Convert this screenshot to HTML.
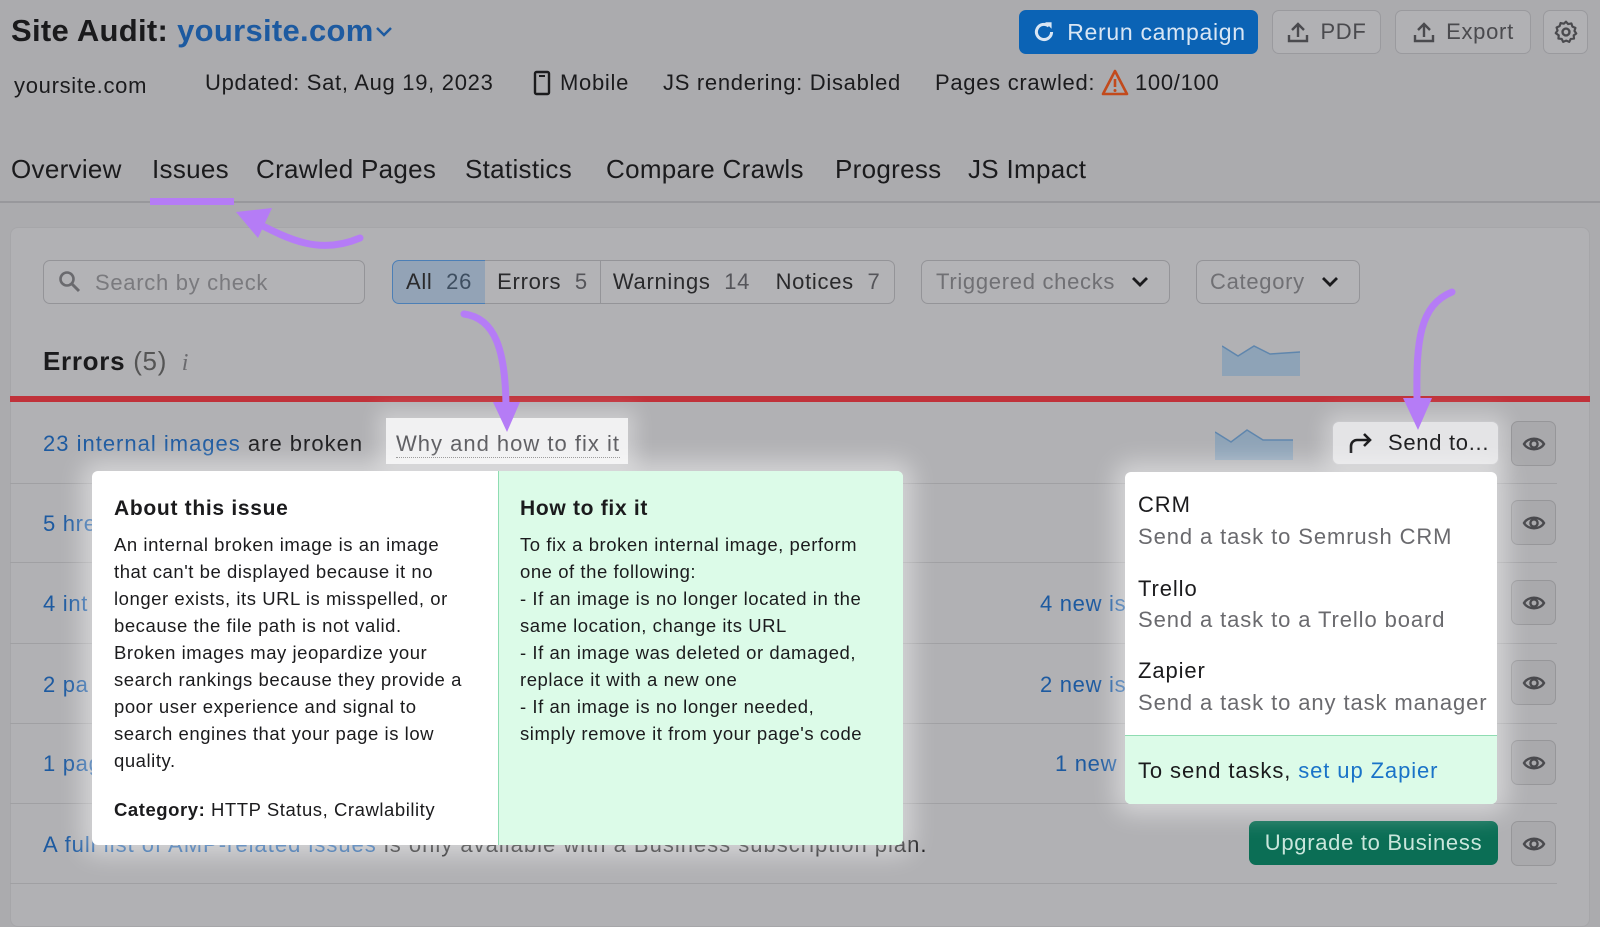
<!DOCTYPE html>
<html><head><meta charset="utf-8"><style>
*{margin:0;padding:0;box-sizing:border-box}
body{width:1600px;height:888px;overflow:hidden;background:#ababae;font-family:"Liberation Sans",sans-serif;color:#1b1b1d;position:relative;letter-spacing:0.7px}
.a{position:absolute;white-space:nowrap}
.blue{color:#1d5aa0}
.btn{position:absolute;border:1px solid #9a9a9e;border-radius:7px;background:#b1b1b4;display:flex;align-items:center;justify-content:center;gap:10px;font-size:22px;color:#4a4a4e}
.seg{position:absolute;top:260px;height:44px;border:1px solid #949498;display:flex;align-items:center;justify-content:center;font-size:22px;color:#2a2a2c;background:#b3b3b6}
.eye{position:absolute;left:1511px;width:45px;height:45px;border:1px solid #969699;border-radius:7px;background:#a9a9ac;display:flex;align-items:center;justify-content:center}
.sep{position:absolute;left:10px;width:1547px;height:1px;background:#a0a0a3}
.row{font-size:22px}
p.b{font-size:18.5px;line-height:27px;letter-spacing:0.55px}
.tab{top:154px;font-size:26px;letter-spacing:0.3px}
</style></head><body>
<!-- header -->
<div class="a" style="left:11px;top:13px;font-size:31px;font-weight:bold;color:#1a1a1c;letter-spacing:0.3px">Site Audit: <span class="blue">yoursite.com</span></div>
<svg class="a" style="left:375px;top:26px" width="18" height="12"><path d="M2 2l7 7 7-7" stroke="#1d5aa0" stroke-width="2.5" fill="none"/></svg>
<div class="btn" style="left:1019px;top:10px;width:239px;height:44px;background:#0b63b5;border-color:#0b63b5;color:#d9e6f4;font-size:23px">
<svg width="26" height="26" viewBox="0 0 24 24"><path d="M19 12a7 7 0 1 1-2.5-5.4" stroke="#d9e6f4" stroke-width="2.8" fill="none"/><path d="M13 3h6v6z" fill="#d9e6f4"/></svg>Rerun campaign</div>
<div class="btn" style="left:1272px;top:10px;width:109px;height:44px">
<svg width="24" height="24" viewBox="0 0 24 24"><path d="M12 17V4M6 10l6-6 6 6M3 15v6h18v-6" stroke="#4a4a4e" stroke-width="2.4" fill="none"/></svg>PDF</div>
<div class="btn" style="left:1395px;top:10px;width:136px;height:44px">
<svg width="24" height="24" viewBox="0 0 24 24"><path d="M12 17V4M6 10l6-6 6 6M3 15v6h18v-6" stroke="#4a4a4e" stroke-width="2.4" fill="none"/></svg>Export</div>
<div class="btn" style="left:1543px;top:10px;width:45px;height:44px">
<svg width="26" height="26" viewBox="0 0 24 24"><circle cx="12" cy="12" r="3.2" stroke="#4a4a4e" stroke-width="2.2" fill="none"/><path d="M12 2.5l2 2.2 3-.6.9 2.9 2.8 1.2-.9 2.8 1.7 2.4-2.4 1.7.3 3-3 .3-1.4 2.7-2.8-1.2-2.8 1.2-1.4-2.7-3-.3.3-3L2.5 13l1.7-2.4-.9-2.8 2.8-1.2.9-2.9 3 .6z" stroke="#4a4a4e" stroke-width="2" fill="none" stroke-linejoin="round"/></svg></div>
<div class="a" style="left:14px;top:73px;font-size:22px">yoursite.com</div>
<div class="a" style="left:205px;top:70px;font-size:22px">Updated: Sat, Aug 19, 2023</div>
<svg class="a" style="left:533px;top:70px" width="18" height="26"><rect x="2" y="2" width="14" height="22" rx="1.5" stroke="#1b1b1d" stroke-width="2.4" fill="none"/><rect x="6" y="5" width="6" height="2" fill="#1b1b1d"/></svg>
<div class="a" style="left:560px;top:70px;font-size:22px">Mobile</div>
<div class="a" style="left:663px;top:70px;font-size:22px">JS rendering: Disabled</div>
<div class="a" style="left:935px;top:70px;font-size:22px">Pages crawled:</div>
<svg class="a" style="left:1101px;top:69px" width="28" height="28" viewBox="0 0 28 28"><path d="M14 2L26 25H2z" stroke="#c24a1c" stroke-width="2.6" fill="none" stroke-linejoin="round"/><path d="M14 10v8" stroke="#c24a1c" stroke-width="2.6"/><circle cx="14" cy="21.5" r="1.5" fill="#c24a1c"/></svg>
<div class="a" style="left:1135px;top:70px;font-size:22px">100/100</div>
<!-- tabs -->
<div class="a tab" style="left:11px">Overview</div>
<div class="a tab" style="left:152px">Issues</div>
<div class="a tab" style="left:256px">Crawled Pages</div>
<div class="a tab" style="left:465px">Statistics</div>
<div class="a tab" style="left:606px">Compare Crawls</div>
<div class="a tab" style="left:835px">Progress</div>
<div class="a tab" style="left:968px">JS Impact</div>
<div class="a" style="left:0;top:201px;width:1600px;height:2px;background:#98989c"></div>
<div class="a" style="left:150px;top:198px;width:84px;height:7px;background:#b57cf6"></div>
<!-- panel -->
<div class="a" style="left:10px;top:227px;width:1580px;height:700px;background:#b1b1b4;border:1px solid #a6a6a9;border-radius:8px"></div>
<svg class="a" style="left:0;top:0" width="1600" height="888">
<path d="M360 238 C320 255 290 240 255 222" stroke="#b57cf6" stroke-width="7" fill="none" stroke-linecap="round"/>
<path d="M236 212 L272 208 L258 238 Z" fill="#b57cf6"/>
</svg>
<div class="a" style="left:43px;top:260px;width:322px;height:44px;border:1px solid #949498;border-radius:7px;background:#b3b3b6"></div>
<svg class="a" style="left:58px;top:270px" width="24" height="24"><circle cx="9" cy="9" r="6.5" stroke="#6a6a6e" stroke-width="2.6" fill="none"/><path d="M14 14l7 7" stroke="#6a6a6e" stroke-width="3"/></svg>
<div class="a" style="left:95px;top:270px;font-size:22px;color:#7a7a7e">Search by check</div>
<div class="seg" style="left:392px;width:94px;border-radius:7px 0 0 7px;background:#93a3b6;border-color:#4c7fb6">All&nbsp;&nbsp;<span style="color:#3e4e60">26</span></div>
<div class="seg" style="left:485px;width:116px;border-left:none">Errors&nbsp;&nbsp;<span style="color:#55555a">5</span></div>
<div class="seg" style="left:600px;width:163px">Warnings&nbsp;&nbsp;<span style="color:#55555a">14</span></div>
<div class="seg" style="left:762px;width:133px;border-radius:0 7px 7px 0;border-left:none">Notices&nbsp;&nbsp;<span style="color:#55555a">7</span></div>
<div class="seg" style="left:921px;width:249px;border-radius:7px;justify-content:flex-start;padding-left:14px;color:#707074">Triggered checks<svg style="margin-left:16px" width="18" height="12"><path d="M2 2l7 7 7-7" stroke="#1b1b1d" stroke-width="2.8" fill="none"/></svg></div>
<div class="seg" style="left:1196px;width:164px;border-radius:7px;justify-content:flex-start;padding-left:13px;color:#707074">Category<svg style="margin-left:16px" width="18" height="12"><path d="M2 2l7 7 7-7" stroke="#1b1b1d" stroke-width="2.8" fill="none"/></svg></div>
<div class="a" style="left:43px;top:346px;font-size:26px"><b>Errors</b> <span style="color:#555">(5)</span> <i style="font-family:'Liberation Serif',serif;color:#6a6a6e;font-size:24px">&nbsp;i</i></div>
<svg class="a" style="left:1222px;top:342px" width="78" height="34"><path d="M0 4 L16 14 L32 4 L48 12 L78 10 V34 H0Z" fill="#8ea3b7"/><path d="M0 4 L16 14 L32 4 L48 12 L78 10" stroke="#5f86ad" stroke-width="1.5" fill="none"/></svg>
<div class="a" style="left:10px;top:396px;width:1580px;height:6px;background:#c0323a"></div>
<!-- rows -->
<div class="sep" style="top:483px"></div><div class="sep" style="top:562px"></div><div class="sep" style="top:643px"></div><div class="sep" style="top:723px"></div><div class="sep" style="top:803px"></div><div class="sep" style="top:883px"></div>
<div class="a row" style="left:43px;top:431px;letter-spacing:1px"><span class="blue">23 internal images</span> are broken</div>
<div class="a" style="left:386px;top:418px;width:242px;height:46px;background:#f1f1f2;box-shadow:0 0 18px 8px rgba(255,255,255,.35)"></div>
<div class="a row" style="left:396px;top:431px;color:#5c5c60;border-bottom:1.5px dotted #888;letter-spacing:1px">Why and how to fix it</div>
<svg class="a" style="left:1215px;top:426px" width="78" height="34"><path d="M0 6 L16 16 L32 4 L48 14 L78 14 V34 H0Z" fill="#8ea3b7"/><path d="M0 6 L16 16 L32 4 L48 14 L78 14" stroke="#5f86ad" stroke-width="1.5" fill="none"/></svg>
<div class="a" style="left:1332px;top:421px;width:167px;height:44px;border:1px solid #c8c8cb;border-radius:7px;background:#e4e4e6;box-shadow:0 0 20px 8px rgba(255,255,255,.35);display:flex;align-items:center;padding-left:15px;gap:14px;font-size:22px">
<svg width="26" height="22" viewBox="0 0 26 22"><path d="M3 21V14a6 6 0 0 1 6-6h13M16 2l6 6-6 6" stroke="#1b1b1d" stroke-width="2.6" fill="none"/></svg>Send to...</div>
<div class="a row blue" style="left:43px;top:511px">5 hre</div>
<div class="a row blue" style="left:43px;top:591px">4 int</div>
<div class="a row blue" style="left:43px;top:672px">2 pa</div>
<div class="a row blue" style="left:43px;top:751px">1 pag</div>
<div class="a row" style="left:43px;top:832px;letter-spacing:1px"><span class="blue">A full list of AMP-related issues</span> is only available with a Business subscription plan.</div>
<div class="a row blue" style="left:1040px;top:591px">4 new is</div>
<div class="a row blue" style="left:1040px;top:672px">2 new is</div>
<div class="a row blue" style="left:1055px;top:751px">1 new</div>
<svg width="0" height="0" style="position:absolute"><defs><g id="eye"><path d="M2 12 C6 5 18 5 22 12 C18 19 6 19 2 12Z" stroke="#4a4a4e" stroke-width="2.4" fill="none"/><circle cx="12" cy="12" r="3.6" fill="none" stroke="#4a4a4e" stroke-width="2.4"/></g></defs></svg>
<div class="eye" style="top:421px"><svg width="26" height="24" viewBox="0 0 24 24"><use href="#eye"/></svg></div>
<div class="eye" style="top:500px"><svg width="26" height="24" viewBox="0 0 24 24"><use href="#eye"/></svg></div>
<div class="eye" style="top:580px"><svg width="26" height="24" viewBox="0 0 24 24"><use href="#eye"/></svg></div>
<div class="eye" style="top:660px"><svg width="26" height="24" viewBox="0 0 24 24"><use href="#eye"/></svg></div>
<div class="eye" style="top:740px"><svg width="26" height="24" viewBox="0 0 24 24"><use href="#eye"/></svg></div>
<div class="eye" style="top:821px"><svg width="26" height="24" viewBox="0 0 24 24"><use href="#eye"/></svg></div>
<div class="a" style="left:1249px;top:821px;width:249px;height:44px;border-radius:7px;background:#0b6e55;color:#c9e6dc;font-size:22px;display:flex;align-items:center;justify-content:center">Upgrade to Business</div>
<!-- fix popup -->
<div class="a" style="left:92px;top:471px;width:811px;height:374px;border-radius:6px;background:#fff;box-shadow:0 0 24px 10px rgba(255,255,255,.45);overflow:hidden">
<div class="a" style="left:406px;top:0;width:405px;height:374px;background:#dcfbe8;border-left:1.5px solid #8fdcb2"></div>
<div class="a" style="left:22px;top:26px;font-size:21px;font-weight:bold">About this issue</div>
<p class="a b" style="left:22px;top:60px">An internal broken image is an image<br>that can't be displayed because it no<br>longer exists, its URL is misspelled, or<br>because the file path is not valid.<br>Broken images may jeopardize your<br>search rankings because they provide a<br>poor user experience and signal to<br>search engines that your page is low<br>quality.</p>
<div class="a" style="left:22px;top:328px;font-size:18.5px;letter-spacing:0.55px"><b>Category:</b> HTTP Status, Crawlability</div>
<div class="a" style="left:428px;top:26px;font-size:21px;font-weight:bold">How to fix it</div>
<p class="a b" style="left:428px;top:60px">To fix a broken internal image, perform<br>one of the following:<br>- If an image is no longer located in the<br>same location, change its URL<br>- If an image was deleted or damaged,<br>replace it with a new one<br>- If an image is no longer needed,<br>simply remove it from your page's code</p>
</div>
<!-- send popup -->
<div class="a" style="left:1125px;top:472px;width:372px;height:332px;border-radius:6px;background:#fff;box-shadow:0 0 24px 10px rgba(255,255,255,.45);overflow:hidden;font-size:22px;letter-spacing:0.9px">
<div class="a" style="left:13px;top:20px">CRM</div>
<div class="a" style="left:13px;top:52px;color:#6a6a6e">Send a task to Semrush CRM</div>
<div class="a" style="left:13px;top:104px">Trello</div>
<div class="a" style="left:13px;top:135px;color:#6a6a6e">Send a task to a Trello board</div>
<div class="a" style="left:13px;top:186px">Zapier</div>
<div class="a" style="left:13px;top:218px;color:#6a6a6e">Send a task to any task manager</div>
<div class="a" style="left:0;top:263px;width:372px;height:69px;background:#dcfbe8;border-top:1.5px solid #8fdcb2"></div>
<div class="a" style="left:13px;top:286px">To send tasks, <span style="color:#1a73c8">set up Zapier</span></div>
</div>
<!-- purple arrows -->
<svg class="a" style="left:0;top:0" width="1600" height="888">
<path d="M464 314 C495 318 506 350 506 410" stroke="#b57cf6" stroke-width="7" fill="none" stroke-linecap="round"/>
<path d="M493 402 L520 402 L507 432 Z" fill="#b57cf6"/>
<path d="M1452 292 C1420 305 1416 340 1417 400" stroke="#b57cf6" stroke-width="7" fill="none" stroke-linecap="round"/>
<path d="M1403 398 L1432 398 L1418 430 Z" fill="#b57cf6"/>
</svg>
</body></html>
